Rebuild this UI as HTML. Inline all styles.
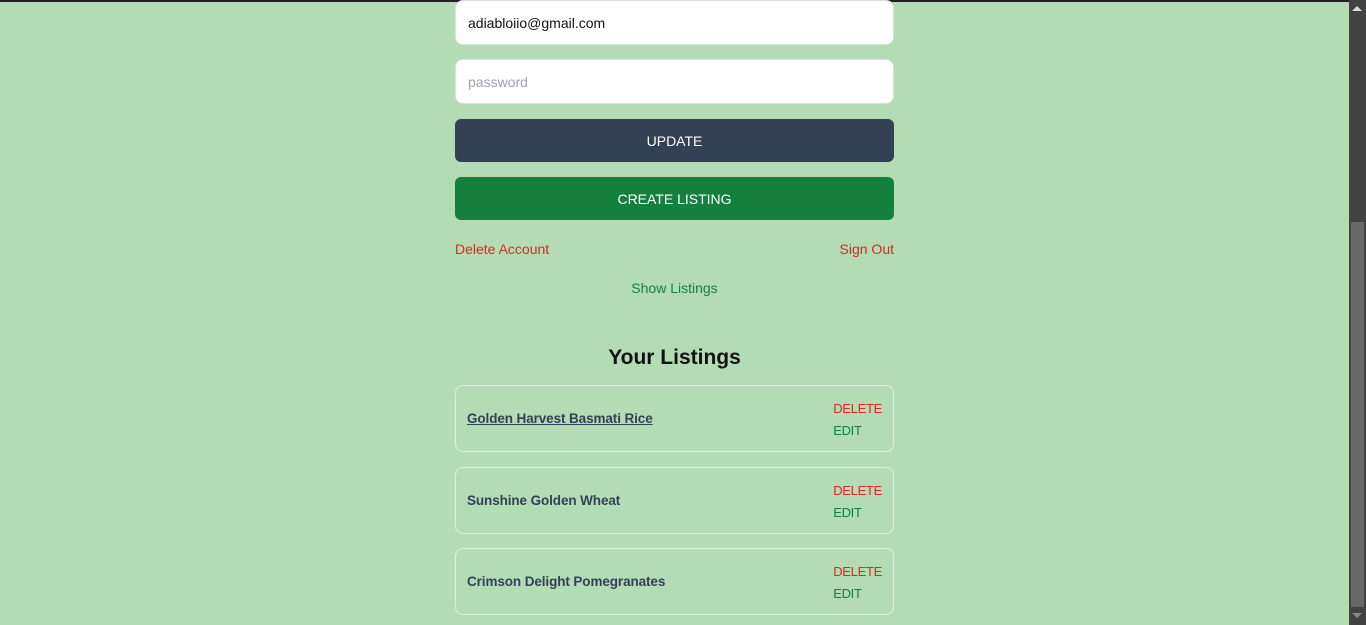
<!DOCTYPE html>
<html><head><style>
*{box-sizing:border-box;margin:0;padding:0}
body{width:1366px;height:625px;overflow:hidden;background:#b3dcb5;font-family:"Liberation Sans",sans-serif;position:relative}
.topbar{position:absolute;left:0;top:0;width:1366px;height:2px;background:#222}
.sb{position:absolute;left:1349px;top:0;width:17px;height:625px;background:#424242}
.thumb{position:absolute;left:1351px;top:222px;width:13px;height:385px;background:#686868}
.up{position:absolute;left:1352px;top:6px;width:0;height:0;border-left:5px solid transparent;border-right:5px solid transparent;border-bottom:5px solid #ddd}
.dn{position:absolute;left:1352px;top:613px;width:0;height:0;border-left:5px solid transparent;border-right:5px solid transparent;border-top:5px solid #888}
.a{position:absolute;left:455px;width:439px}
.inp{background:#fff;border:1px solid #ddd;border-radius:8px;height:45px;padding-left:12px;line-height:45px;font-size:14px}
.btn{border-radius:6px;height:43px;line-height:44px;text-align:center;color:#fff;font-size:14px}
.card{border:1px solid #e2ebe2;border-radius:8px;height:67px}
.t{position:absolute;left:11px;top:25px;font-size:13.5px;font-weight:bold;color:#334155;letter-spacing:-0.1px}
.d{position:absolute;right:11px;top:12px;font-size:13px;color:#dc2626;line-height:22px;text-align:left;letter-spacing:-0.3px}
.d span{display:block}
.d .e{color:#15803d}
</style></head><body>
<div class="topbar"></div>
<div class="a inp" style="top:0;height:45px;color:#111">adiabloiio@gmail.com</div>
<div class="a inp" style="top:59px;color:#9ca3af">password</div>
<div class="a btn" style="top:119px;background:#334155">UPDATE</div>
<div class="a btn" style="top:177px;background:#15803d">CREATE LISTING</div>
<div class="a" style="top:241px;font-size:14px;color:#dc2626">Delete Account<span style="float:right">Sign Out</span></div>
<div class="a" style="top:280px;font-size:14px;color:#15803d;text-align:center">Show Listings</div>
<div class="a" style="top:346px;font-size:21px;font-weight:bold;text-align:center;color:#111">Your Listings</div>
<div class="a card" style="top:385px"><div class="t" style="text-decoration:underline">Golden Harvest Basmati Rice</div><div class="d"><span>DELETE</span><span class="e">EDIT</span></div></div>
<div class="a card" style="top:467px"><div class="t">Sunshine Golden Wheat</div><div class="d"><span>DELETE</span><span class="e">EDIT</span></div></div>
<div class="a card" style="top:548px"><div class="t">Crimson Delight Pomegranates</div><div class="d"><span>DELETE</span><span class="e">EDIT</span></div></div>
<div class="sb"></div><div class="thumb"></div><div class="up"></div><div class="dn"></div>
</body></html>
